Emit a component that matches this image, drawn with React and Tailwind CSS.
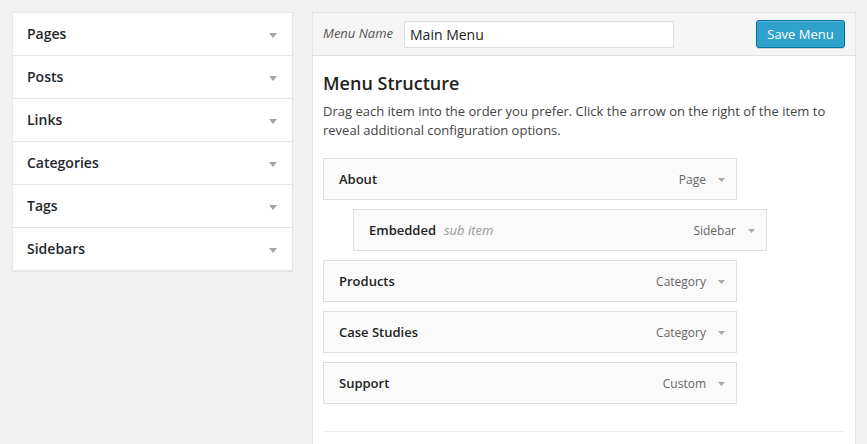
import React from "react";

function Tri({ w = 8, h = 5, color = "#a0a5aa" }) {
  return (
    <svg width={w} height={h} viewBox={`0 0 ${w} ${h}`} className="shrink-0">
      <polygon points={`0,0 ${w},0 ${w / 2},${h}`} fill={color} />
    </svg>
  );
}

const sections = ["Pages", "Posts", "Links", "Categories", "Tags", "Sidebars"];

const items = [
  { title: "About", type: "Page" },
  { title: "Embedded", type: "Sidebar", sub: true },
  { title: "Products", type: "Category" },
  { title: "Case Studies", type: "Category" },
  { title: "Support", type: "Custom" },
];

export default function App() {
  return (
    <div className="h-[444px] overflow-hidden bg-[#f1f1f1] flex items-start gap-[19px] pl-3 pt-3 font-['Open_Sans',sans-serif] text-[#23282d]">
      <div className="w-[281px] bg-white border border-[#e5e5e5] shadow-[0_1px_1px_rgba(0,0,0,0.04)]">
        {sections.map((s, i) => (
          <div
            key={s}
            className={`h-[42px] flex items-center justify-between pl-[14px] pr-[15px] ${
              i < sections.length - 1 ? "border-b border-[#e5e5e5] box-content" : ""
            }`}
          >
            <span className="text-[14px] font-semibold leading-none">{s}</span>
            <span className="pt-[2px] flex">
              <Tri w={8} h={5} color="#a0a5aa" />
            </span>
          </div>
        ))}
      </div>

      <div className="w-[544px] bg-white border border-[#e5e5e5] shadow-[0_1px_1px_rgba(0,0,0,0.04)] pb-[60px]">
        <div className="h-[42px] box-content bg-[#f5f5f5] border-b border-[#dfdfdf] flex items-center px-[10px]">
          <span className="text-[13px] italic text-[#555]">Menu Name</span>
          <div className="ml-[11px] w-[270px] h-[27px] bg-white border border-[#dddddd] shadow-[inset_0_1px_2px_rgba(0,0,0,0.04)] flex items-center pl-[5px] text-[14px] text-[#222]">
            Main Menu
          </div>
          <button className="ml-auto w-[89px] h-[28px] rounded-[3px] bg-[#2ea2cc] border border-[#0074a2] text-white text-[13px] leading-none shadow-[inset_0_1px_0_rgba(120,200,230,0.5),0_1px_0_rgba(0,0,0,0.15)]">
            Save Menu
          </button>
        </div>

        <div className="px-[10px] pt-[15px]">
          <h3 className="text-[18px] font-semibold leading-[24px] text-[#222]">Menu Structure</h3>
          <p className="mt-[7px] text-[13px] leading-[19px] text-[#444]">
            Drag each item into the order you prefer. Click the arrow on the right of the item to reveal additional configuration options.
          </p>

          <div className="mt-[18px] flex flex-col gap-[9px]">
            {items.map((it) => (
              <div
                key={it.title}
                className={`w-[414px] h-[42px] bg-[#fafafa] border border-[#dfdfdf] flex items-center pl-[15px] pr-[11px] pt-px ${
                  it.sub ? "ml-[30px]" : ""
                }`}
              >
                <span className="text-[13px] font-semibold text-[#222]">{it.title}</span>
                {it.sub && (
                  <span className="ml-[8px] text-[13px] italic text-[#999]">sub item</span>
                )}
                <span className="ml-auto text-[12px] text-[#666]">{it.type}</span>
                <span className="ml-[12px] flex pt-[1px]">
                  <Tri w={7} h={4} color="#aaaaaa" />
                </span>
              </div>
            ))}
          </div>

          <div className="mt-[27px] h-px bg-[#eeeeee]" />
        </div>
      </div>
    </div>
  );
}
